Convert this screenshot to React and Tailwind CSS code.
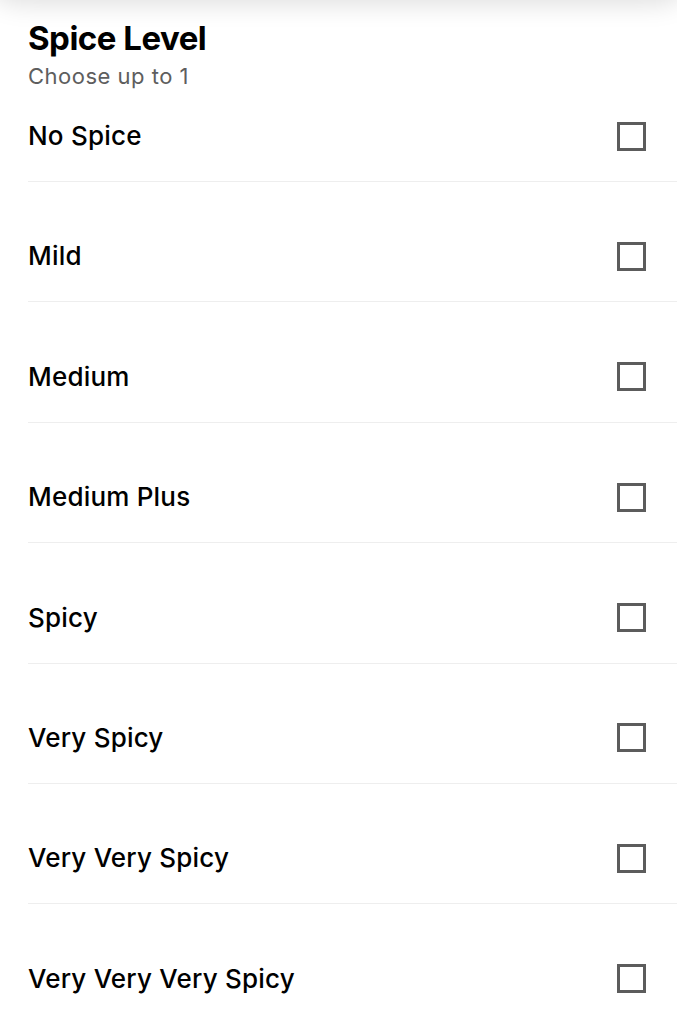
import React from "react";

const items = [
  "No Spice",
  "Mild",
  "Medium",
  "Medium Plus",
  "Spicy",
  "Very Spicy",
  "Very Very Spicy",
  "Very Very Very Spicy",
];

export default function App() {
  return (
    <div className="relative w-[677px] h-[1024px] overflow-hidden bg-white" style={{ fontFamily: "Inter, 'Noto Sans', sans-serif" }}>
      <div className="pointer-events-none absolute left-[-10px] right-[-10px] top-[-30px] h-[30px] rounded-b-[40px] shadow-[0_0_26px_4px_rgba(0,0,0,0.13)]" />
      <div className="pl-[28px] pt-[19px]">
        <h1 className="text-[33px] leading-[38px] font-bold text-black tracking-[-0.5px]">Spice Level</h1>
        <p className="mt-[5px] text-[22px] leading-[28px] text-[#5e5e5e] tracking-[0.5px]">Choose up to 1</p>
      </div>
      <div className="pl-[28px]">
        {items.map((label, i) => (
          <div
            key={label}
            className={`flex items-center justify-between border-b border-[#eeeeee] pb-[29px] pr-[31px] ${i === 0 ? "pt-[30px]" : "pt-[58.4px]"}`}
          >
            <span className="text-[26px] leading-[32px] font-medium text-black tracking-[0.2px]">{label}</span>
            <span className="block w-[29px] h-[29px] border-[3.5px] border-[#5c5c5c]" />
          </div>
        ))}
      </div>
    </div>
  );
}
